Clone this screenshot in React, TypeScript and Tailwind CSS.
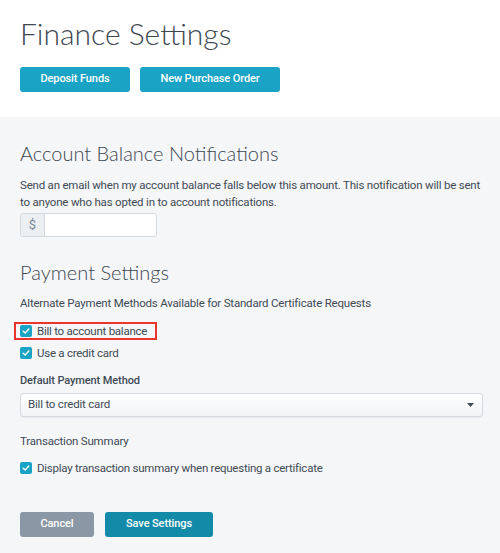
import { useState } from 'react'

const heading = { fontFamily: 'Lato, "Noto Sans", sans-serif' }
const body = { fontFamily: 'Roboto, "Liberation Sans", sans-serif' }

function Check({ label, checked, onChange }: { label: string; checked: boolean; onChange: () => void }) {
  return (
    <label className="flex cursor-pointer items-center gap-[5px] whitespace-nowrap text-[11.5px] leading-[14px] tracking-[-0.25px] text-[#3f4a54]">
      <span
        onClick={onChange}
        className={`flex h-[12px] w-[12px] shrink-0 items-center justify-center rounded-[2px] ${checked ? 'bg-[#1aa3c4]' : 'border border-[#b5bec7] bg-white'}`}
      >
        {checked && (
          <svg width="8" height="8" viewBox="0 0 10 10" fill="none">
            <path d="M1.5 5.2 L4 7.5 L8.5 2.5" stroke="white" strokeWidth="1.8" strokeLinecap="round" strokeLinejoin="round" />
          </svg>
        )}
      </span>
      {label}
    </label>
  )
}

export default function App() {
  const [billAccount, setBillAccount] = useState(true)
  const [creditCard, setCreditCard] = useState(true)
  const [summary, setSummary] = useState(true)

  return (
    <div className="min-h-[553px] w-[500px] bg-[#f5f6f8]" style={body}>
      <div className="bg-white px-[20px] pb-[25px] pt-[14px]">
        <h1 className="text-[30px] font-light leading-[38px] text-[#3d4852]" style={heading}>
          Finance Settings
        </h1>
        <div className="mt-[15px] flex gap-[10px]">
          <button className="h-[25px] w-[110px] rounded-[3px] bg-[#1aa3c4] text-[11px] font-medium tracking-[-0.1px] text-white">
            Deposit Funds
          </button>
          <button className="h-[25px] w-[140px] rounded-[3px] bg-[#1aa3c4] text-[11px] font-medium tracking-[-0.1px] text-white">
            New Purchase Order
          </button>
        </div>
      </div>

      <div className="pl-[20px] pr-[17px] pt-[22px]">
        <h2 className="text-[20px] font-light leading-[28px] text-[#3d4852]" style={heading}>
          Account Balance Notifications
        </h2>
        <p className="mt-[10px] text-[11.5px] leading-[17px] tracking-[-0.2px] text-[#3f4a54]">
          Send an email when my account balance falls below this amount. This notification will be sent to anyone who has opted in to account notifications.
        </p>
        <div className="mt-[2px] flex h-[24px] w-[137px] overflow-hidden rounded-[3px] border border-[#d3d9df] bg-white">
          <span className="flex w-[24px] items-center justify-center border-r border-[#d3d9df] bg-[#eceff2] text-[13px] text-[#7d8893]">
            $
          </span>
          <input className="min-w-0 flex-1 px-2 text-[13px] outline-none" />
        </div>

        <h2 className="mt-[21px] text-[20px] font-light leading-[28px] text-[#3d4852]" style={heading}>
          Payment Settings
        </h2>
        <p className="mt-[9px] text-[11.5px] leading-[17px] tracking-[-0.2px] text-[#3f4a54]">
          Alternate Payment Methods Available for Standard Certificate Requests
        </p>
        <div className="-ml-[6px] mt-[10px] w-[143px] border-2 border-[#e8362d] pl-[4px]">
          <Check label="Bill to account balance" checked={billAccount} onChange={() => setBillAccount(!billAccount)} />
        </div>
        <div className="mt-[6px]">
          <Check label="Use a credit card" checked={creditCard} onChange={() => setCreditCard(!creditCard)} />
        </div>

        <p className="mt-[12px] text-[11px] font-medium leading-[17px] tracking-[-0.1px] text-[#3f4a54]">
          Default Payment Method
        </p>
        <div className="mt-[4px] flex h-[24px] items-center justify-between rounded-[3px] border border-[#d3d9df] bg-gradient-to-b from-white to-[#f1f3f5] pl-[7px] pr-[8px] text-[11.5px] tracking-[-0.2px] text-[#3f4a54] shadow-[0_1px_1px_rgba(0,0,0,0.05)]">
          <span>Bill to credit card</span>
          <svg width="7" height="4" viewBox="0 0 7 4">
            <path d="M0 0 H7 L3.5 4 Z" fill="#3f4a54" />
          </svg>
        </div>

        <p className="mt-[16px] text-[11.5px] leading-[17px] tracking-[-0.2px] text-[#3f4a54]">Transaction Summary</p>
        <div className="mt-[11px]">
          <Check
            label="Display transaction summary when requesting a certificate"
            checked={summary}
            onChange={() => setSummary(!summary)}
          />
        </div>

        <div className="mt-[37px] flex gap-[11px] pb-[18px]">
          <button className="h-[25px] w-[74px] rounded-[3px] bg-[#8a97a5] text-[11px] font-medium tracking-[-0.1px] text-white">
            Cancel
          </button>
          <button className="h-[25px] w-[108px] rounded-[3px] bg-[#138aa8] text-[11px] font-medium tracking-[-0.1px] text-white">
            Save Settings
          </button>
        </div>
      </div>
    </div>
  )
}
